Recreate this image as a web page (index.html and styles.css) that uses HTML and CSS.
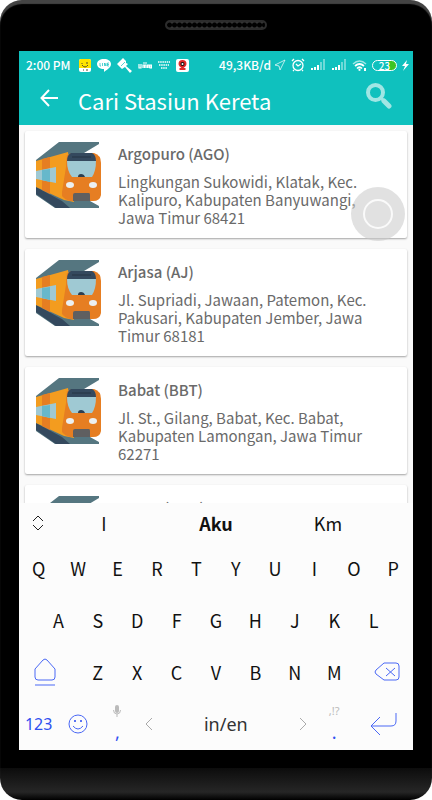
FILE: index.html
```html
<!DOCTYPE html>
<html lang="id">
<head>
    <meta charset="UTF-8">
    <meta name="viewport" content="width=device-width, initial-scale=1.0">
    <title>Cari Stasiun Kereta</title>
    <link rel="stylesheet" href="styles.css">
</head>
<body>
    <!-- Shared train picture -->
    <svg class="symbols" aria-hidden="true">
        <symbol id="train" viewBox="0 0 65 66">
            <path fill="#557680" d="M0 20V18L23 0H63V2L48 11L25 17L0 26z"/>
            <path fill="#557680" d="M0 43L28 56L54 59L63 64V66H19L0 53z"/>
            <path fill="#34495e" d="M0 45L26 59L34 66H20L0 52z"/>
            <path fill="#f39c1f" d="M0 19L32 10L38 60L28 58L0 45z"/>
            <path fill="#e67e22" d="M6 17L14 15V52L6 48z"/>
            <path fill="#9fc9d3" d="M0 29L20 25V41L0 37z"/>
            <path fill="#67b8cb" d="M6 28L14 27V40L6 38z"/>
            <path fill="#e67e22" d="M37 11H58Q65 13 65 21V53Q64 59 57 59H34Q29 58 26 54V21Q29 12 37 11z"/>
            <path fill="#f39c1f" d="M26 15L31 14Q30 19 30 25L26 50z"/>
            <path fill="#34495e" d="M35 11H56Q60 13 60 19H31Q31 13 35 11z"/>
            <path fill="#2c3e50" d="M36 14H55V16H36z"/>
            <path fill="#9fc9d3" d="M31 19H60Q60 29 56 35H36Q31 29 31 19z"/>
            <path fill="#2c3e50" d="M42 35Q42 32 45 32Q48 32 49 35z"/>
            <ellipse cx="34" cy="43" rx="4" ry="3" fill="#ecf0f1"/>
            <ellipse cx="57" cy="43" rx="4" ry="3" fill="#ecf0f1"/>
            <path fill="#5f5f60" d="M39 51H53Q54 51 54 53V59H37V53Q37 51 39 51z"/>
        </symbol>
        <symbol id="signal" viewBox="0 0 16 12">
            <path fill="#fff" d="M1 9h2v2H1zM4 8h2v3H4zM7 6h2v5H7z"/>
            <path fill="#fff" opacity=".4" d="M10 3h2v8h-2zM13 0h2v11h-2z"/>
        </symbol>
    </svg>

    <div class="phone">
        <div class="speaker"></div>

        <div class="screen">
            <header class="app-header">
                <div class="status-bar">
                    <span class="clock">2:00 PM</span>
                    <div class="notifications">
                        <svg width="12" height="13" viewBox="0 0 12 13">
                            <rect width="12" height="13" rx="2" fill="#fff"/>
                            <path fill="#ffe500" d="M2 0h8a2 2 0 0 1 2 2v7H0V2a2 2 0 0 1 2-2z"/>
                            <path stroke="#57512a" fill="none" d="M3 4v1M7 4h2M3 6q3 4 6 0M4 11h1M7 11h2"/>
                        </svg>
                        <svg width="14" height="13" viewBox="0 0 14 13">
                            <path fill="#fff" d="M7 0c4 0 7 2 7 5 0 4-5 6-7 8V10C3 10 0 8 0 5 0 2 3 0 7 0z"/>
                            <path stroke="#0fc1be" stroke-width=".7" fill="none" d="M3 4v3h1M5.500 4v3M7.500 7V4l1.500 3V4M12 4h-1.500v3H12M10.500 5.500H12"/>
                        </svg>
                        <svg width="15" height="15" viewBox="0 0 15 15">
                            <path fill="#fff" d="M0 6L6 0l3 3v2l2 1-2 2 6 5-2 2-5-6-3 2z"/>
                            <path stroke="#0fc1be" stroke-width=".7" d="M4 8l4-4"/>
                        </svg>
                        <svg width="14" height="7" viewBox="0 0 14 7">
                            <path stroke="#fff" stroke-width="1.200" fill="none" d="M1 2v4h2V2M5 6V3h1.500v3V3H8v3M9.500 6V3H11v3M13.500 6V3H12v3h2M5 1h4"/>
                        </svg>
                        <svg width="12" height="8" viewBox="0 0 12 8">
                            <path stroke="#fff" stroke-width="1.500" stroke-dasharray="1.500 .7" d="M0 1h12M1 4h10M3 7h6"/>
                        </svg>
                        <svg width="13" height="13" viewBox="0 0 13 13">
                            <rect width="13" height="13" rx="2" fill="#fff"/>
                            <path fill="#e02b2b" d="M6.500 1a4 4 0 0 1 4 4c0 2-2 3-3 4h2v2h-6V9h2c-1-1-3-2-3-4a4 4 0 0 1 4-4z"/>
                            <circle cx="6.500" cy="5" r="2" fill="#111"/>
                            <circle cx="6.500" cy="5" r="1" fill="#fff"/>
                        </svg>
                    </div>
                    <span class="speed">49,3KB/d</span>
                    <div class="system-icons">
                        <svg width="12" height="12" viewBox="0 0 12 12">
                            <path fill="none" stroke="#fff" stroke-opacity=".7" d="M11 1L1 6l4 1 1 4z"/>
                        </svg>
                        <svg width="14" height="14" viewBox="0 0 14 14">
                            <circle cx="7" cy="7.500" r="5" fill="none" stroke="#fff" stroke-width="1.300"/>
                            <path fill="none" stroke="#fff" stroke-width="1.300" d="M1 3l2-2M13 3l-2-2M5 6l2 2 3-2M3 12l-1 1M11 12l1 1"/>
                        </svg>
                        <svg width="16" height="12"><use href="#signal"/></svg>
                        <svg width="16" height="12"><use href="#signal"/></svg>
                        <svg width="15" height="13" viewBox="0 0 15 13">
                            <path fill="none" stroke="#fff" stroke-opacity=".6" stroke-width="1.500" d="M1 5q6.500-6 13 0"/>
                            <path fill="none" stroke="#fff" stroke-width="1.700" d="M3 7q4.500-4 9 0M5 9.500q2.500-2.500 5 0"/>
                            <path fill="#fff" d="M6 11l1.500-1.500L9 11l-1.500 1zM12 9h2v3h-2z"/>
                        </svg>
                        <span class="battery">23</span>
                        <svg width="7" height="11" viewBox="0 0 7 11">
                            <path fill="#fff" d="M5 0L0 6h3L1 11l6-7H4z"/>
                        </svg>
                    </div>
                </div>

                <div class="toolbar">
                    <button class="icon-button" aria-label="Kembali">
                        <svg width="18" height="18" viewBox="0 0 18 18">
                            <path fill="none" stroke="#fff" stroke-width="2" d="M9 1L1.500 9 9 17M2 9h16"/>
                        </svg>
                    </button>
                    <h1>Cari Stasiun Kereta</h1>
                    <button class="icon-button search" aria-label="Cari">
                        <svg width="26" height="26" viewBox="0 0 26 26">
                            <circle cx="9.500" cy="9.500" r="7.500" fill="none" stroke="#a0e6e4" stroke-width="4"/>
                            <path stroke="#a0e6e4" stroke-width="3" d="M15 15l3 3"/>
                            <path stroke="#a0e6e4" stroke-width="5" stroke-linecap="round" d="M18 18l5 5"/>
                        </svg>
                    </button>
                </div>
            </header>

            <!-- Station list -->
            <main class="stations">
                <article class="card">
                    <svg class="train"><use href="#train"/></svg>
                    <div class="info">
                        <h2>Argopuro (AGO)</h2>
                        <p>Lingkungan Sukowidi, Klatak, Kec. Kalipuro, Kabupaten Banyuwangi, Jawa Timur 68421</p>
                    </div>
                </article>
                <article class="card">
                    <svg class="train"><use href="#train"/></svg>
                    <div class="info">
                        <h2>Arjasa (AJ)</h2>
                        <p>Jl. Supriadi, Jawaan, Patemon, Kec. Pakusari, Kabupaten Jember, Jawa Timur 68181</p>
                    </div>
                </article>
                <article class="card">
                    <svg class="train"><use href="#train"/></svg>
                    <div class="info">
                        <h2>Babat (BBT)</h2>
                        <p>Jl. St., Gilang, Babat, Kec. Babat, Kabupaten Lamongan, Jawa Timur 62271</p>
                    </div>
                </article>
                <article class="card">
                    <svg class="train"><use href="#train"/></svg>
                    <div class="info">
                        <h2>Bagor (BGR)</h2>
                    </div>
                </article>
            </main>

            <!-- Keyboard -->
            <div class="keyboard">
                <div class="suggestions">
                    <button class="expand" aria-label="Perluas">
                        <svg width="12" height="16" viewBox="0 0 12 16">
                            <path fill="none" stroke="#222" d="M1 6l5-5 5 5M1 10l5 5 5-5"/>
                        </svg>
                    </button>
                    <button>I</button>
                    <button class="best">Aku</button>
                    <button>Km</button>
                </div>
                <div class="keys keys-top">
                    <button>Q</button><button>W</button><button>E</button><button>R</button><button>T</button>
                    <button>Y</button><button>U</button><button>I</button><button>O</button><button>P</button>
                </div>
                <div class="keys keys-middle">
                    <button>A</button><button>S</button><button>D</button><button>F</button><button>G</button>
                    <button>H</button><button>J</button><button>K</button><button>L</button>
                </div>
                <div class="keys keys-lower">
                    <button class="shift" aria-label="Shift">
                        <svg width="22" height="28" viewBox="0 0 22 28">
                            <path fill="none" stroke="#4a68f5" d="M1 11L9 2q2-2 4 0l8 9v8q0 3-3 3H4q-3 0-3-3zM1 27h20"/>
                        </svg>
                    </button>
                    <button>Z</button><button>X</button><button>C</button><button>V</button>
                    <button>B</button><button>N</button><button>M</button>
                    <button class="backspace" aria-label="Hapus">
                        <svg width="26" height="20" viewBox="0 0 26 20">
                            <path fill="none" stroke="#4a68f5" d="M10 1h12q3 0 3 3v11q0 3-3 3H10L2 12q-2-2 0-4zM12 6l9 8M21 6l-9 8"/>
                        </svg>
                    </button>
                </div>
                <div class="keys keys-bottom">
                    <button>123</button>
                    <button aria-label="Emoji">
                        <svg width="20" height="20" viewBox="0 0 20 20">
                            <circle cx="10" cy="10" r="9" fill="none" stroke="#4a68f5"/>
                            <path fill="none" stroke="#4a68f5" d="M5 12q5 6 10 0"/>
                            <circle cx="7" cy="7" r="1" fill="#2546f0"/>
                            <circle cx="13" cy="7" r="1" fill="#2546f0"/>
                        </svg>
                    </button>
                    <button class="stacked" aria-label="Koma">
                        <svg width="8" height="12" viewBox="0 0 8 12">
                            <rect x="2" width="4" height="8" rx="2" fill="#bbb"/>
                            <path fill="none" stroke="#bbb" d="M.5 5q0 4 3.500 4t3.500-4M4 9v3"/>
                        </svg>
                        <span>,</span>
                    </button>
                    <button class="space">
                        <svg width="8" height="12" viewBox="0 0 8 12">
                            <path fill="none" stroke="#aaa" d="M7 0L1 6l6 6"/>
                        </svg>
                        <span>in/en</span>
                        <svg width="8" height="12" viewBox="0 0 8 12">
                            <path fill="none" stroke="#aaa" d="M1 0l6 6-6 6"/>
                        </svg>
                    </button>
                    <button class="stacked" aria-label="Titik">
                        <small>,!?</small>
                        <span>.</span>
                    </button>
                    <button aria-label="Enter">
                        <svg width="27" height="22" viewBox="0 0 27 22">
                            <path fill="none" stroke="#4a68f5" d="M10 4L1 13l9 9M1 13h20q5 0 5-5V0"/>
                        </svg>
                    </button>
                </div>
            </div>

            <div class="assistive-touch"></div>
        </div>
    </div>
</body>
</html>
```

FILE: styles.css
```css
/* Reset */
* {
    margin: 0;
    padding: 0;
    box-sizing: border-box;
}

/* Variables */
:root {
    --teal: #0fc1be;
    --text-color: #6a6a6a;
    --key-blue: #2f50f0;
}

body {
    background-color: #fff;
    font-family: "Noto Sans CJK SC", "Noto Sans", sans-serif;
    color: var(--text-color);
}

button {
    border: none;
    background: none;
    font: inherit;
    color: inherit;
}

svg {
    display: block;
    flex: none;
}

.symbols {
    position: absolute;
    width: 0;
    height: 0;
}

/* Phone body */
.phone {
    height: 100vh;
    display: flex;
    flex-direction: column;
    padding: 20px 19px 50px;
    border-radius: 22px;
    background:
        linear-gradient(#0c0c0c, #262626 75%, #000) bottom / 100% 32px no-repeat,
        #000;
    box-shadow: inset 0 4px 1px #444;
    overflow: hidden;
}

.speaker {
    flex: none;
    align-self: center;
    width: 102px;
    height: 10px;
    margin-bottom: 21px;
    border: 2px solid #2c2c2c;
    border-radius: 5px;
    background: radial-gradient(circle, #000 2px, #333 3px) 0 0 / 5px 6px;
}

.screen {
    flex: 1;
    min-height: 0;
    display: flex;
    flex-direction: column;
    position: relative;
    background-color: #fafafa;
}

/* Header */
.app-header {
    flex: none;
    background-color: var(--teal);
    color: #fff;
}

.status-bar {
    height: 28px;
    display: flex;
    align-items: center;
    padding: 0 4px 0 7px;
    font-size: 12px;
    font-weight: 500;
    line-height: 28px;
}

.notifications {
    display: flex;
    align-items: center;
    gap: 6px;
    margin-left: 8px;
}

.speed {
    margin-left: auto;
}

.system-icons {
    display: flex;
    align-items: center;
    gap: 5px;
    margin-left: 3px;
}

.battery {
    width: 25px;
    height: 11px;
    border: 1px solid #fff;
    border-radius: 6px;
    background: linear-gradient(to right, transparent 70%, #3dc422 70%);
    font-size: 10px;
    line-height: 9px;
    text-align: center;
}

.toolbar {
    height: 46px;
    display: flex;
    align-items: center;
    padding: 0 21px 4px;
}

.icon-button {
    display: flex;
    padding-bottom: 4px;
}

.toolbar h1 {
    flex: 1;
    margin-left: 20px;
    font-size: 22px;
    font-weight: 400;
    line-height: 42px;
}

.search {
    padding-bottom: 8px;
}

/* Station list */
.stations {
    flex: 1;
    min-height: 0;
    display: flex;
    flex-direction: column;
    gap: 11px;
    padding: 6px;
    overflow: hidden;
}

.card {
    flex: none;
    min-height: 107px;
    display: flex;
    gap: 17px;
    padding: 11px 25px 11px 11px;
    border-radius: 2px;
    background-color: #fff;
    box-shadow: 0 1px 2px rgba(0, 0, 0, 0.35);
}

.train {
    width: 65px;
    height: 66px;
}

.info {
    flex: 1;
}

.info h2 {
    margin-bottom: 7px;
    font-size: 15px;
    font-weight: 500;
    line-height: 24px;
}

.info p {
    font-size: 15px;
    line-height: 18px;
}

/* Floating touch button */
.assistive-touch {
    position: absolute;
    top: 136px;
    right: 8px;
    width: 54px;
    height: 54px;
    border-radius: 50%;
    background-color: rgba(200, 200, 200, 0.55);
}

.assistive-touch::before {
    content: '';
    position: absolute;
    inset: 12px;
    border: 2px solid #fafafa;
    border-radius: 50%;
}

/* Keyboard */
.keyboard {
    flex: none;
    height: 247px;
    display: flex;
    flex-direction: column;
    background-color: #fcfcfc;
    color: #111;
    font-size: 18px;
}

.suggestions {
    height: 39px;
    display: grid;
    grid-template-columns: 29px 1fr 1fr 1fr 29px;
    align-items: center;
}

.expand {
    padding-left: 13px;
}

.best {
    font-weight: 700;
}

.keys {
    flex: 1;
    display: grid;
}

.keys-top {
    grid-template-columns: repeat(10, 1fr);
}

.keys-middle {
    grid-template-columns: repeat(9, 1fr);
    padding: 0 5%;
}

.keys-lower {
    grid-template-columns: 3fr repeat(7, 2fr) 3fr;
}

.keys-bottom {
    grid-template-columns: 2fr 2fr 2fr 9fr 2fr 3fr;
    color: var(--key-blue);
    font-family: "Noto Sans", sans-serif;
    font-size: 16px;
}

.keys button {
    min-width: 0;
    display: flex;
    align-items: center;
    justify-content: center;
}

.keys .shift {
    padding: 0 8px 0 0;
}

.keys .backspace {
    padding: 0 0 0 8px;
}

.keys .space {
    justify-content: space-between;
    padding: 0 8px;
    color: #333;
    font-size: 18px;
}

.keys .stacked {
    flex-direction: column;
    justify-content: space-between;
    padding: 7px 0;
    font-size: 18px;
    line-height: 22px;
}

.stacked small {
    color: #bbb;
    font-size: 11px;
    line-height: 12px;
}
```
